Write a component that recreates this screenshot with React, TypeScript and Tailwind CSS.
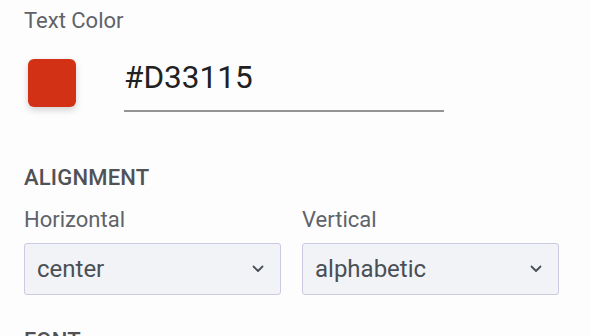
import { ReactNode } from "react"

const font = { fontFamily: "Roboto, 'Noto Sans', sans-serif" }

function Chevron() {
  return (
    <svg width="12" height="8" viewBox="0 0 12 8" className="shrink-0">
      <polyline points="1.5,1.5 6,6 10.5,1.5" fill="none" stroke="#4b5057" strokeWidth="1.8" strokeLinecap="round" strokeLinejoin="round" />
    </svg>
  )
}

function Field({ label, value }: { label: string; value: string }) {
  return (
    <div className="flex flex-col">
      <label className="text-[22px] leading-[28px] text-[#606368]">{label}</label>
      <div className="mt-[9px] h-[52px] flex items-center justify-between pl-3 pr-[16px] bg-[#f1f3f7] border border-[#cdc9e3] rounded-[3px]">
        <span className="text-[24px] leading-[30px] text-[#4a4f55]">{value}</span>
        <Chevron />
      </div>
    </div>
  )
}

function Heading({ children, className = "" }: { children: ReactNode; className?: string }) {
  return (
    <h3 className={`text-[22px] leading-[28px] font-medium text-[#505256] tracking-[0.2px] ${className}`}>
      {children}
    </h3>
  )
}

export default function App() {
  return (
    <div className="w-[590px] h-[336px] overflow-hidden bg-[#fdfdfe]" style={font}>
      <div className="pl-6 pt-[7px] w-[559px]">
        <label className="block text-[22px] leading-[28px] text-[#606368]">Text Color</label>

        <div className="mt-6 flex items-start">
          <div className="ml-1 w-12 h-12 rounded-[6px] bg-[#D33115] shadow-[0_3px_7px_rgba(0,0,0,0.18)]" />
          <div className="ml-12 mt-px w-[320px] pb-[14px] border-b-2 border-[#949494]">
            <span className="text-[31.5px] leading-[36px] text-[#212121]">#D33115</span>
          </div>
        </div>

        <Heading className="mt-[52px]">ALIGNMENT</Heading>
        <div className="mt-[14px] grid grid-cols-[257px_257px] gap-x-[21px]">
          <Field label="Horizontal" value="center" />
          <Field label="Vertical" value="alphabetic" />
        </div>

        <Heading className="mt-8">FONT</Heading>
      </div>
    </div>
  )
}
